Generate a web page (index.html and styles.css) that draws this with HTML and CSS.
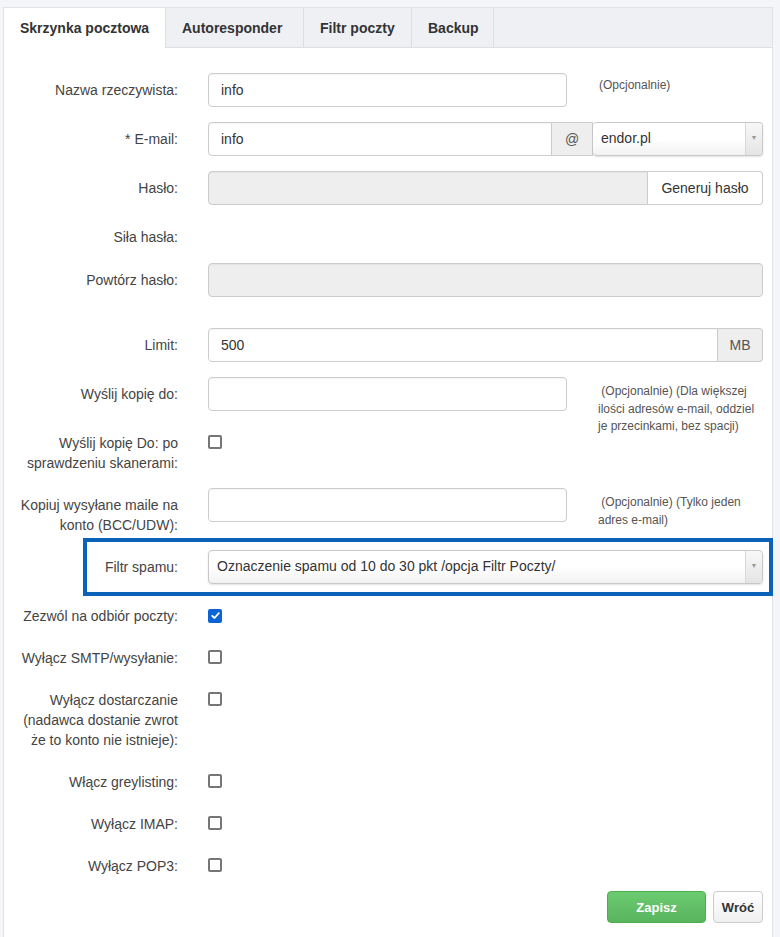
FILE: index.html
```html
<!DOCTYPE html>
<html lang="pl">
<head>
<meta charset="utf-8">
<title>Skrzynka pocztowa</title>
<link rel="stylesheet" href="styles.css">
</head>
<body>
<div class="panel">
  <ul class="tabs">
    <li class="tab active tab-box">Skrzynka pocztowa</li>
    <li class="tab tab-auto">Autoresponder</li>
    <li class="tab tab-filter">Filtr poczty</li>
    <li class="tab tab-backup">Backup</li>
  </ul>
  <div class="panel-body">
    <div class="row">
      <label class="lbl">Nazwa rzeczywista:</label>
      <div class="short">
        <div class="input">info</div>
        <div class="help help-one">(Opcjonalnie)</div>
      </div>
    </div>

    <div class="row">
      <label class="lbl">* E-mail:</label>
      <div class="group">
        <div class="input grow joined-left">info</div>
        <div class="addon at">@</div>
        <div class="select joined-right domain"><span class="sel-text">endor.pl</span><span class="arrow">▼</span></div>
      </div>
    </div>

    <div class="row">
      <label class="lbl">Hasło:</label>
      <div class="group">
        <div class="input grow disabled joined-left"></div>
        <div class="btn-addon">Generuj hasło</div>
      </div>
    </div>

    <div class="row row-small">
      <label class="lbl">Siła hasła:</label>
      <div></div>
    </div>

    <div class="row row-spaced">
      <label class="lbl">Powtórz hasło:</label>
      <div class="input disabled"></div>
    </div>

    <div class="row">
      <label class="lbl">Limit:</label>
      <div class="group">
        <div class="input grow joined-left">500</div>
        <div class="addon mb">MB</div>
      </div>
    </div>

    <div class="row">
      <label class="lbl">Wyślij kopię do:</label>
      <div class="short">
        <div class="input"></div>
        <div class="help">&nbsp;(Opcjonalnie) (Dla większej ilości adresów e-mail, oddziel je przecinkami, bez spacji)</div>
      </div>
    </div>

    <div class="row">
      <label class="lbl">Wyślij kopię Do: po sprawdzeniu skanerami:</label>
      <div class="check-cell"><span class="cb"></span></div>
    </div>

    <div class="row">
      <label class="lbl">Kopiuj wysyłane maile na konto (BCC/UDW):</label>
      <div class="short">
        <div class="input"></div>
        <div class="help">&nbsp;(Opcjonalnie) (Tylko jeden adres e-mail)</div>
      </div>
    </div>

    <div class="row highlight">
      <label class="lbl">Filtr spamu:</label>
      <div class="select"><span class="sel-text">Oznaczenie spamu od 10 do 30 pkt /opcja Filtr Poczty/</span><span class="arrow">▼</span></div>
    </div>

    <div class="row">
      <label class="lbl">Zezwól na odbiór poczty:</label>
      <div class="check-cell"><span class="cb checked"><svg viewBox="0 0 13 13" width="13" height="13"><path d="M3.2 6.8 L5.5 9 L9.8 4.2" fill="none" stroke="#fff" stroke-width="1.8" stroke-linecap="round" stroke-linejoin="round"/></svg></span></div>
    </div>

    <div class="row">
      <label class="lbl">Wyłącz SMTP/wysyłanie:</label>
      <div class="check-cell"><span class="cb"></span></div>
    </div>

    <div class="row">
      <label class="lbl">Wyłącz dostarczanie (nadawca dostanie zwrot że to konto nie istnieje):</label>
      <div class="check-cell"><span class="cb"></span></div>
    </div>

    <div class="row">
      <label class="lbl">Włącz greylisting:</label>
      <div class="check-cell"><span class="cb"></span></div>
    </div>

    <div class="row">
      <label class="lbl">Wyłącz IMAP:</label>
      <div class="check-cell"><span class="cb"></span></div>
    </div>

    <div class="row">
      <label class="lbl">Wyłącz POP3:</label>
      <div class="check-cell"><span class="cb"></span></div>
    </div>

    <div class="actions">
      <button class="btn btn-success">Zapisz</button>
      <button class="btn btn-default">Wróć</button>
    </div>
  </div>
</div>
</body>
</html>
```

FILE: styles.css
```css
* { box-sizing: border-box; }

body {
  margin: 0;
  background: #f3f5f8;
  font-family: "Liberation Sans", Arial, sans-serif;
  font-size: 14px;
  color: #333;
}

.panel {
  margin: 7px 0 0 3px;
  width: 770px;
  min-height: 940px;
  background: #fff;
  border: 1px solid #dfe3e8;
}

.tabs {
  list-style: none;
  margin: 0;
  padding: 0;
  display: flex;
  height: 40px;
  background: #eef0f3;
  border-bottom: 1px solid #dcdfe3;
}

.tab {
  height: 40px;
  line-height: 40px;
  padding: 0 0 0 16px;
  font-weight: bold;
  font-size: 14px;
  color: #333;
  white-space: nowrap;
  border-right: 1px solid #dcdfe3;
}

.tab.active { background: #fff; }

.tab-box { width: 162px; }
.tab-auto { width: 138px; }
.tab-filter { width: 108px; }
.tab-backup { width: 82px; }

.panel-body {
  padding: 25px 9px 30px 14px;
}

.row {
  display: grid;
  grid-template-columns: 160px 1fr;
  column-gap: 30px;
  margin-bottom: 15px;
}

.row-small { min-height: 28px; }
.row-spaced { margin-bottom: 31px; }

.lbl {
  text-align: right;
  padding-top: 7px;
  line-height: 20px;
  color: #444;
}

.short {
  display: grid;
  grid-template-columns: 359px 1fr;
  column-gap: 31px;
  height: 34px;
}

.input {
  height: 34px;
  line-height: 32px;
  padding: 0 12px;
  border: 1px solid #ccc;
  border-radius: 4px;
  background: #fff;
  color: #333;
  box-shadow: inset 0 1px 1px rgba(0,0,0,0.04);
}

.input.disabled { background: #eee; }

.help {
  font-size: 12px;
  line-height: 17.5px;
  color: #555;
  padding-top: 6px;
}

.help-one { padding-top: 4px; padding-left: 1px; }

.group { display: flex; }
.grow { flex: 1; }

.joined-left { border-top-right-radius: 0; border-bottom-right-radius: 0; }
.joined-right { border-top-left-radius: 0; border-bottom-left-radius: 0; }

.addon {
  height: 34px;
  line-height: 32px;
  background: #eee;
  border: 1px solid #ccc;
  border-left: none;
  color: #555;
  text-align: center;
}

.addon.at { width: 41px; }
.addon.mb { width: 45px; border-radius: 0 4px 4px 0; }

.btn-addon {
  width: 115px;
  height: 34px;
  line-height: 32px;
  border: 1px solid #ccc;
  border-left: none;
  border-radius: 0 4px 4px 0;
  background: #fff;
  text-align: center;
  color: #333;
}

.select {
  height: 34px;
  line-height: 31px;
  border: 1px solid #c8c8c8;
  border-radius: 4px;
  background: linear-gradient(#fff 0%, #fff 50%, #f2f2f2 100%);
  box-shadow: 0 1px 2px rgba(0,0,0,0.12);
  padding-left: 8px;
  display: flex;
  color: #333;
}

.select.domain { width: 170px; border-left: none; padding-left: 8px; }

.sel-text { flex: 1; white-space: nowrap; overflow: hidden; }

.arrow {
  width: 17px;
  border-left: 1px solid #d8d8d8;
  background: linear-gradient(#f8f8f8, #e4e4e4);
  font-size: 7px;
  color: #999;
  text-align: center;
  line-height: 30px;
  border-radius: 0 4px 4px 0;
}

.highlight { position: relative; }

.highlight::after {
  content: "";
  position: absolute;
  left: 65px;
  right: -10px;
  top: -12px;
  bottom: -12px;
  border: 4px solid #0a63b9;
  pointer-events: none;
}

.check-cell { padding-top: 9px; }

.cb {
  display: block;
  width: 14px;
  height: 14px;
  border: 2px solid #767676;
  border-radius: 2px;
  background: #fff;
}

.cb.checked {
  border: none;
  background: #0b63d6;
}

.cb.checked svg { display: block; margin: 0.5px; }

.actions {
  display: flex;
  justify-content: flex-end;
  gap: 7px;
}

.btn {
  height: 32px;
  font-family: "Liberation Sans", Arial, sans-serif;
  font-size: 13px;
  font-weight: bold;
  border-radius: 4px;
  cursor: pointer;
}

.btn-success {
  width: 99px;
  color: #fff;
  background: linear-gradient(#6ccb70, #59b45e);
  border: 1px solid #4cae4c;
}

.btn-default {
  width: 50px;
  color: #333;
  background: linear-gradient(#fff, #f0f0f0);
  border: 1px solid #ccc;
}
```
